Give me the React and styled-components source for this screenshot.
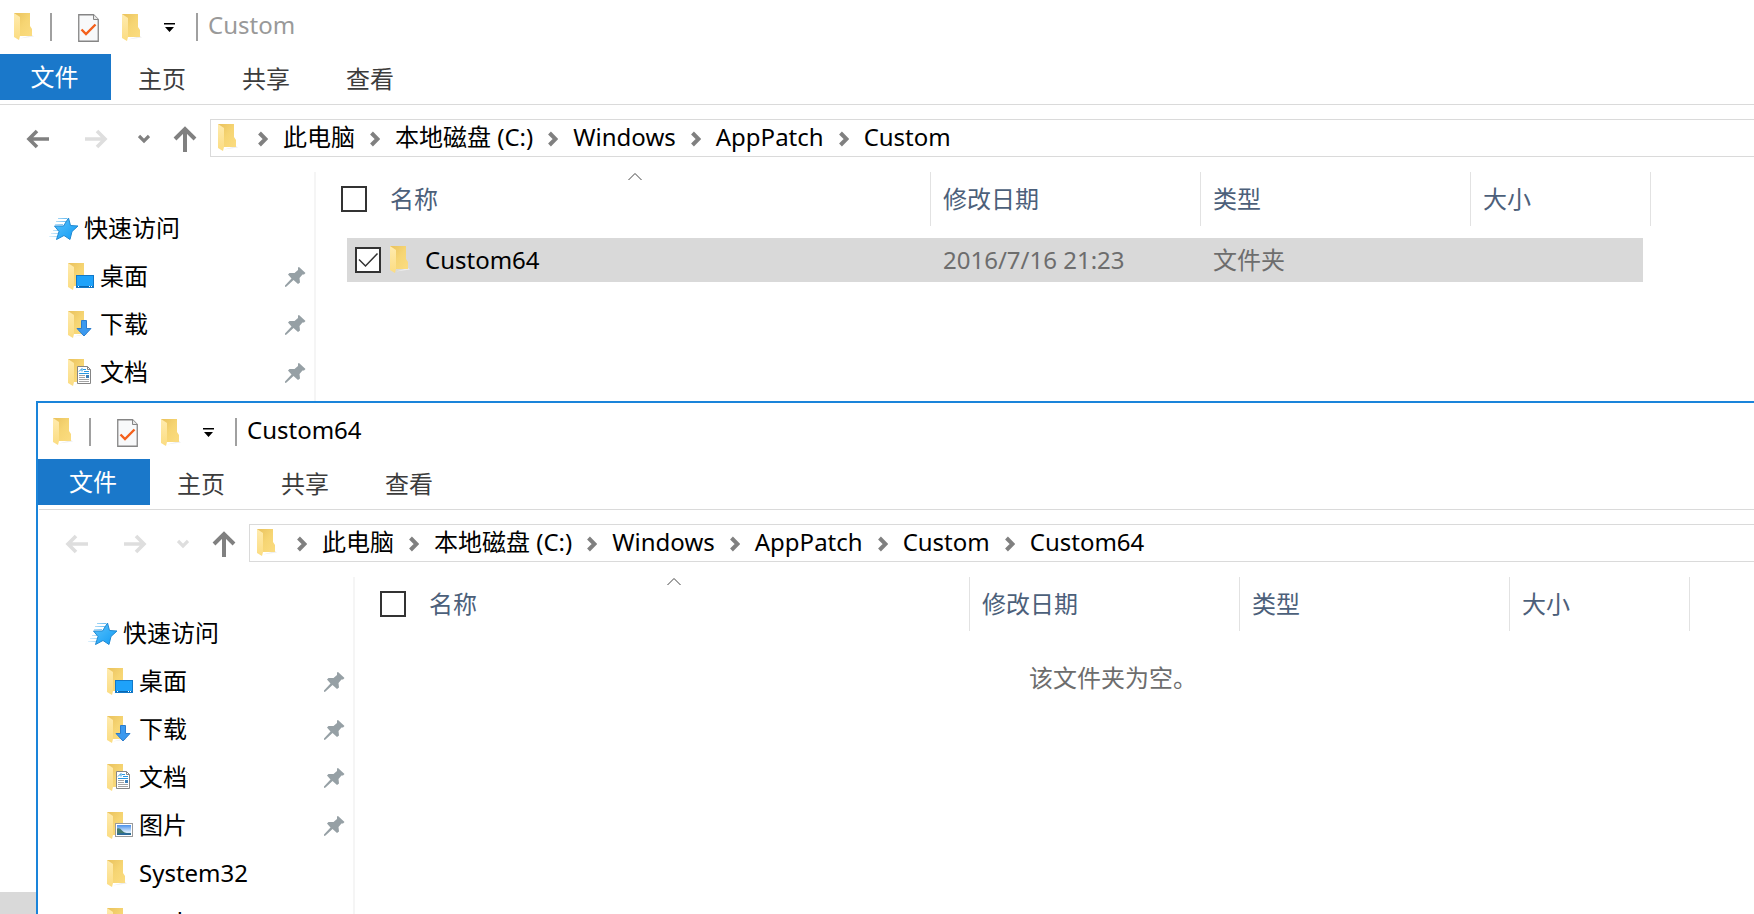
import React, { useId } from "react";
import styled, { createGlobalStyle } from "styled-components";

const GlobalStyle = createGlobalStyle`
  * { box-sizing: border-box; }
  html, body { margin: 0; padding: 0; background: #fff; }
  body, button, input, table {
    font-family: "Noto Sans", "Noto Sans CJK SC", sans-serif;
    font-size: 24px;
    line-height: 32px;
    color: #000;
  }
  button { background: none; border: 0; padding: 0; }
  ul, ol { list-style: none; margin: 0; padding: 0; }
  svg { display: block; flex: none; }
`;

const Desktop = styled.main`
  position: relative;
  height: 100vh;
  overflow: hidden;
`;

const Window = styled.section`
  display: flex;
  flex-direction: column;
  height: 100%;
  background: #fff;
`;

const FrontWindow = styled(Window)`
  position: absolute;
  top: 401px;
  left: 36px;
  right: 0;
  bottom: 0;
  height: auto;
  overflow: hidden;
  border: solid #1a84da;
  border-width: 2px 0 0 2px;
  padding: 2px 0 0 1px;
`;

const TitleBar = styled.header`
  display: flex;
  align-items: center;
  flex: none;
  height: 54px;
  padding-left: 14px;
`;

const Separator = styled.span`
  width: 2px;
  height: 28px;
  margin-left: ${(p) => (p.$lead ? 16 : 0)}px;
  background: #a0a0a0;
`;

const QuickTools = styled.div`
  display: flex;
  align-items: center;
  gap: 22px;
  padding: 2px 21px 0 26px;
`;

const Title = styled.h1`
  margin: 0 0 4px 10px;
  font-size: 24px;
  font-weight: 400;
  line-height: 32px;
  color: ${(p) => (p.$active ? "#000" : "#999")};
`;

const IconButton = styled.button`
  display: flex;
  align-items: center;
  justify-content: center;
`;

const TabBar = styled.nav`
  display: flex;
  flex: none;
  height: 51px;
  border-bottom: 1px solid #dadada;
`;

const FileTab = styled.button`
  width: ${(p) => (p.$active ? 112 : 111)}px;
  height: 46px;
  padding-right: 2px;
  margin-left: ${(p) => (p.$active ? -1 : 0)}px;
  background: #1a78ca;
  color: #fff;
`;

const Tab = styled.button`
  width: 104px;
  height: 50px;
  padding-right: 2px;
  color: #3c3c3c;
`;

const NavBar = styled.div`
  display: flex;
  align-items: center;
  flex: none;
  height: 66px;
`;

const NavButtons = styled.div`
  display: flex;
  align-items: center;
  width: 210px;
  padding: 2px 0 0 26px;
`;

const NavButton = styled(IconButton)`
  width: 24px;
  height: 28px;
  margin-right: ${(p) => p.$gap}px;
  color: ${(p) => (p.disabled ? "#dedede" : "#808080")};
`;

const AddressBar = styled.div`
  display: flex;
  align-items: center;
  flex: 1;
  height: 38px;
  padding-left: 7px;
  border: solid #dadada;
  border-width: 1px 0 1px 1px;
`;

const Crumbs = styled.ol`
  display: flex;
  padding-left: 5px;
`;

const Crumb = styled.li`
  display: flex;
  align-items: center;
  white-space: pre;
  svg { margin: 2px 15px 0; }
  a { color: #000; text-decoration: none; padding-bottom: 2px; }
`;

const Body = styled.div`
  display: flex;
  flex: 1;
  min-height: 0;
`;

const Sidebar = styled.aside`
  display: flex;
  flex-direction: column;
  flex: none;
  width: 316px;
  overflow: hidden;
  padding-top: 33px;
  border-right: 2px solid #f5f5f5;
  margin-top: 1px;
`;

const SideItem = styled.a`
  display: flex;
  align-items: center;
  flex: none;
  height: 48px;
  padding: 0 8px 0 ${(p) => (p.$root ? 48 : 68)}px;
  color: #000;
  text-decoration: none;
  span { flex: 1; padding: 0 0 2px ${(p) => (p.$root ? 4 : 5)}px; }
`;

const SelectedSideItem = styled.div`
  height: 22px;
  margin-top: auto;
  background: #d9d9d9;
`;

const Pane = styled.div`
  flex: 1;
  min-width: 0;
  overflow: hidden;
`;

const FileTable = styled.table`
  display: block;
  margin-top: 1px;
  thead, tbody { display: block; }
`;

const HeadRow = styled.tr`
  display: grid;
  grid-template-columns: 615px 270px 270px 180px;
  height: 54px;
`;

const HeadCell = styled.th`
  display: flex;
  align-items: center;
  position: relative;
  padding: 0 0 0 ${(p) => (p.$first ? 25 : 12)}px;
  border-right: 1px solid #e2e2e2;
  font-weight: 400;
  color: #4c607a;
  gap: 23px;
`;

const SortMark = styled.svg`
  position: absolute;
  top: 0;
  left: 50%;
  margin-left: 5px;
`;

const FileRow = styled.tr`
  display: grid;
  grid-template-columns: 584px 270px 270px 172px;
  width: 1296px;
  height: 44px;
  margin: 12px 0 0 31px;
  background: #d9d9d9;
`;

const FileCell = styled.td`
  display: flex;
  align-items: center;
  padding: 0 0 0 ${(p) => (p.$first ? 8 : 12)}px;
  color: ${(p) => (p.$first ? "#000" : "#6d6d6d")};
  svg + span { padding-left: 15px; }
  label + svg { margin-left: 9px; }
`;

const Check = styled.label`
  position: relative;
  display: block;
  width: 26px;
  height: 26px;
  svg { position: absolute; top: 0; left: 0; pointer-events: none; }
  input:not(:checked) + svg { display: none; }
`;

const CheckBox = styled.input`
  appearance: none;
  display: block;
  width: 26px;
  height: 26px;
  margin: 0;
  background: #fff;
  border: 2px solid #333;
`;

const EmptyNote = styled.p`
  margin: 31px 0 0 674px;
  color: #6d6d6d;
`;

function Folder({ overlay }) {
  const id = useId();
  return (
    <svg width={overlay ? 27 : 20} height="28" viewBox={overlay ? "0 0 27 28" : "0 0 20 28"} aria-hidden="true">
      <defs>
        <linearGradient id={id + "b"} x1="0" y1="0" x2="1" y2="1">
          <stop offset="0" stopColor="#e9c15c" />
          <stop offset=".5" stopColor="#f6d573" />
          <stop offset="1" stopColor="#fbdc80" />
        </linearGradient>
        <linearGradient id={id + "f"} x1="0" y1="0" x2="0" y2="1">
          <stop offset="0" stopColor="#ffebae" />
          <stop offset="1" stopColor="#fbdc81" />
        </linearGradient>
        <linearGradient id={id + "s"} x1="0" y1="0" x2="0" y2="1">
          <stop offset="0" stopColor="#4a90ea" />
          <stop offset=".7" stopColor="#d9ecff" />
        </linearGradient>
      </defs>
      <path d="M6 25.500L20 23.500L18 22z" fill="#eee" />
      <path d="M0 0H16V13L18 16V23H5L0 18z" fill={`url(#${id}b)`} />
      <path d="M0 0L6 4V23L5 27L0 24z" fill={`url(#${id}f)`} />
      {overlay === "desktop" && (
        <g>
          <rect x="8.500" y="12.500" width="17" height="12" fill="#1ea2fa" stroke="#1178c8" />
          <path d="M9 23.500h16" stroke="#0b67b0" />
          <path d="M10 23.500h1M21 23.500h1M23 23.500h1" stroke="#fff" />
        </g>
      )}
      {overlay === "downloads" && (
        <path d="M13.500 9.500h5v8h4.500L16 25L9 17.500h4.500z" fill="#3b99ef" stroke="#2b7ccd" />
      )}
      {overlay === "documents" && (
        <g>
          <path d="M9.500 7.500h10l3 3v14h-13z" fill="#fff" stroke="#858585" />
          <path d="M19.500 7.500v3h3" fill="none" stroke="#858585" />
          <path d="M11 12.500l3-3v3M15 10.500h3M16 12.500h5M11 14.500h10" stroke="#2a98e0" fill="none" />
          <path d="M11 16.500h6M11 18.500h6M11 20.500h10M11 22.500h10" stroke="#a5a5a5" />
          <path d="M18 16h3v3h-3z" fill="#3c7fb8" />
        </g>
      )}
      {overlay === "pictures" && (
        <g>
          <rect x="8.500" y="11.500" width="17" height="13" fill="#fff" stroke="#9a9a9a" />
          <rect x="10" y="13" width="14" height="10" fill={`url(#${id}s)`} />
          <path d="M10 16.500q3-1 5 2t9 2.500v2H10z" fill="#437a70" />
          <path d="M10 21.500q7-1 14 0V23H10z" fill="#2a6a9c" />
        </g>
      )}
    </svg>
  );
}

const PropertiesIcon = () => (
  <svg width="22" height="28" viewBox="0 0 22 28" aria-hidden="true">
    <path d="M.750 .750H15.500L20.250 5.500V27.250H.750z" fill="#f8f9fa" stroke="#858585" strokeWidth="1.300" />
    <path d="M15.500 .750V5.500H20.250" fill="#e8e8e8" stroke="#858585" />
    <path d="M3.500 15.500L8 20L17.500 10.500" fill="none" stroke="#f4601b" strokeWidth="2.400" />
  </svg>
);

const MenuMark = () => (
  <svg width="11" height="10" viewBox="0 0 11 10" aria-hidden="true">
    <path d="M0 0H11V1.500H0zM1 4H10L5.500 9z" fill="#000" />
  </svg>
);

const ArrowLeft = () => (
  <svg width="24" height="24" viewBox="0 0 24 24" fill="none" stroke="currentColor" strokeWidth="3.600" aria-hidden="true">
    <path d="M3 12H23M11 4L3 12L11 20" />
  </svg>
);

const ArrowRight = () => (
  <svg width="24" height="24" viewBox="0 0 24 24" fill="none" stroke="currentColor" strokeWidth="3.600" aria-hidden="true">
    <path d="M1 12H21M13 4L21 12L13 20" />
  </svg>
);

const ChevronDown = () => (
  <svg width="12" height="10" viewBox="0 0 12 10" fill="none" stroke="currentColor" strokeWidth="3.200" aria-hidden="true">
    <path d="M1 2L6 7L11 2" />
  </svg>
);

const ArrowUp = () => (
  <svg width="24" height="26" viewBox="0 0 24 26" fill="none" stroke="currentColor" strokeWidth="4" aria-hidden="true">
    <path d="M12 3V26M2 13L12 3L22 13" />
  </svg>
);

const CrumbChevron = () => (
  <svg width="10" height="16" viewBox="0 0 10 16" fill="none" stroke="#808080" strokeWidth="4" aria-hidden="true">
    <path d="M1.500 2L7.500 8L1.500 14" />
  </svg>
);

const PinIcon = () => (
  <svg width="21" height="20" viewBox="0 0 21 20" fill="#96a0a5" aria-hidden="true">
    <path d="M14 0L20.500 6L19 7.500L17.500 7.500L14.500 11L15 15.500L13 17L8.500 13L1.500 19.500L0 20V18.500L6.500 11.500L3 7.500L4.500 6H9.500L13 3V.500z" />
  </svg>
);

function StarIcon() {
  const id = useId();
  return (
    <svg width="32" height="24" viewBox="0 0 32 24" aria-hidden="true">
      <defs>
        <linearGradient id={id} x1="0" y1="0" x2="1" y2="1">
          <stop offset="0" stopColor="#5cc3fb" />
          <stop offset="1" stopColor="#109bf5" />
        </linearGradient>
        <linearGradient id={id + "t"} gradientUnits="userSpaceOnUse" x1="1" y1="0" x2="18" y2="0">
          <stop offset="0" stopColor="#dff1fc" />
          <stop offset="1" stopColor="#6bbdf0" />
        </linearGradient>
      </defs>
      <path d="M10 1.500h9M8 4.500h10M7 7.500h8M5 13.500h5M3 16.500h7M1 19.500h8" stroke={`url(#${id}t)`} fill="none" />
      <path d="M20.500 1L22.500 8.500L30 9L24 14.500L22 22.500L16 18.500L8.500 22.500L11 14.500L6.500 9H15.500z" fill={`url(#${id})`} stroke="#2089d2" />
    </svg>
  );
}

const places = [
  { name: "桌面", overlay: "desktop", pinned: true },
  { name: "下载", overlay: "downloads", pinned: true },
  { name: "文档", overlay: "documents", pinned: true },
  { name: "图片", overlay: "pictures", pinned: true },
  { name: "System32" },
  { name: "tools" },
];

function SelectBox({ label, checked }) {
  return (
    <Check>
      <CheckBox type="checkbox" aria-label={label} defaultChecked={checked} />
      <svg width="26" height="26" viewBox="0 0 26 26" fill="none" stroke="#333" strokeWidth="1.500">
        <path d="M4 12.500L10.500 19L22.500 6.500" />
      </svg>
    </Check>
  );
}

function Explorer({ frame: Frame, active, title, path, canGoBack, items, children, sidebarEnd }) {
  return (
    <Frame aria-label={title}>
      <TitleBar>
        <Folder />
        <Separator $lead />
        <QuickTools>
          <IconButton aria-label="属性"><PropertiesIcon /></IconButton>
          <IconButton aria-label="新建文件夹"><Folder /></IconButton>
          <IconButton aria-label="自定义快速访问工具栏"><MenuMark /></IconButton>
        </QuickTools>
        <Separator />
        <Title $active={active}>{title}</Title>
      </TitleBar>
      <TabBar>
        <FileTab $active={active}>文件</FileTab>
        <Tab>主页</Tab>
        <Tab>共享</Tab>
        <Tab>查看</Tab>
      </TabBar>
      <NavBar>
        <NavButtons>
          <NavButton $gap={34} disabled={!canGoBack} aria-label="后退"><ArrowLeft /></NavButton>
          <NavButton $gap={24} disabled aria-label="前进"><ArrowRight /></NavButton>
          <NavButton $gap={17} disabled={!canGoBack} aria-label="最近位置"><ChevronDown /></NavButton>
          <NavButton $gap={0} aria-label="上移"><ArrowUp /></NavButton>
        </NavButtons>
        <AddressBar>
          <Folder />
          <Crumbs>
            {path.map((name) => (
              <Crumb key={name}>
                <CrumbChevron />
                <a href="#path">{name}</a>
              </Crumb>
            ))}
          </Crumbs>
        </AddressBar>
      </NavBar>
      <Body>
        <Sidebar>
          <SideItem href="#quick" $root>
            <StarIcon />
            <span>快速访问</span>
          </SideItem>
          {items.map((item) => (
            <SideItem href="#place" key={item.name}>
              <Folder overlay={item.overlay || "plain"} />
              <span>{item.name}</span>
              {item.pinned && <PinIcon />}
            </SideItem>
          ))}
          {sidebarEnd}
        </Sidebar>
        <Pane>
          <FileTable>
            <thead>
              <HeadRow>
                <HeadCell $first>
                  <SelectBox label="全选" />
                  名称
                  <SortMark width="14" height="9" viewBox="0 0 14 9" fill="none" stroke="#444">
                    <path d="M.500 8L7 1.500L13.500 8" />
                  </SortMark>
                </HeadCell>
                <HeadCell>修改日期</HeadCell>
                <HeadCell>类型</HeadCell>
                <HeadCell>大小</HeadCell>
              </HeadRow>
            </thead>
            {!active && (
              <tbody>
                <FileRow>
                  <FileCell $first>
                    <SelectBox label="Custom64" checked />
                    <Folder />
                    <span>Custom64</span>
                  </FileCell>
                  <FileCell>2016/7/16 21:23</FileCell>
                  <FileCell>文件夹</FileCell>
                  <FileCell />
                </FileRow>
              </tbody>
            )}
          </FileTable>
          {children}
        </Pane>
      </Body>
    </Frame>
  );
}

const basePath = ["此电脑", "本地磁盘 (C:)", "Windows", "AppPatch", "Custom"];

export default function App() {
  return (
    <>
      <GlobalStyle />
      <Desktop>
        <Explorer
          frame={Window}
          title="Custom"
          path={basePath}
          canGoBack
          items={places.slice(0, 3)}
          sidebarEnd={<SelectedSideItem />}
        />
        <Explorer frame={FrontWindow} active title="Custom64" path={[...basePath, "Custom64"]} items={places}>
          <EmptyNote>该文件夹为空。</EmptyNote>
        </Explorer>
      </Desktop>
    </>
  );
}
